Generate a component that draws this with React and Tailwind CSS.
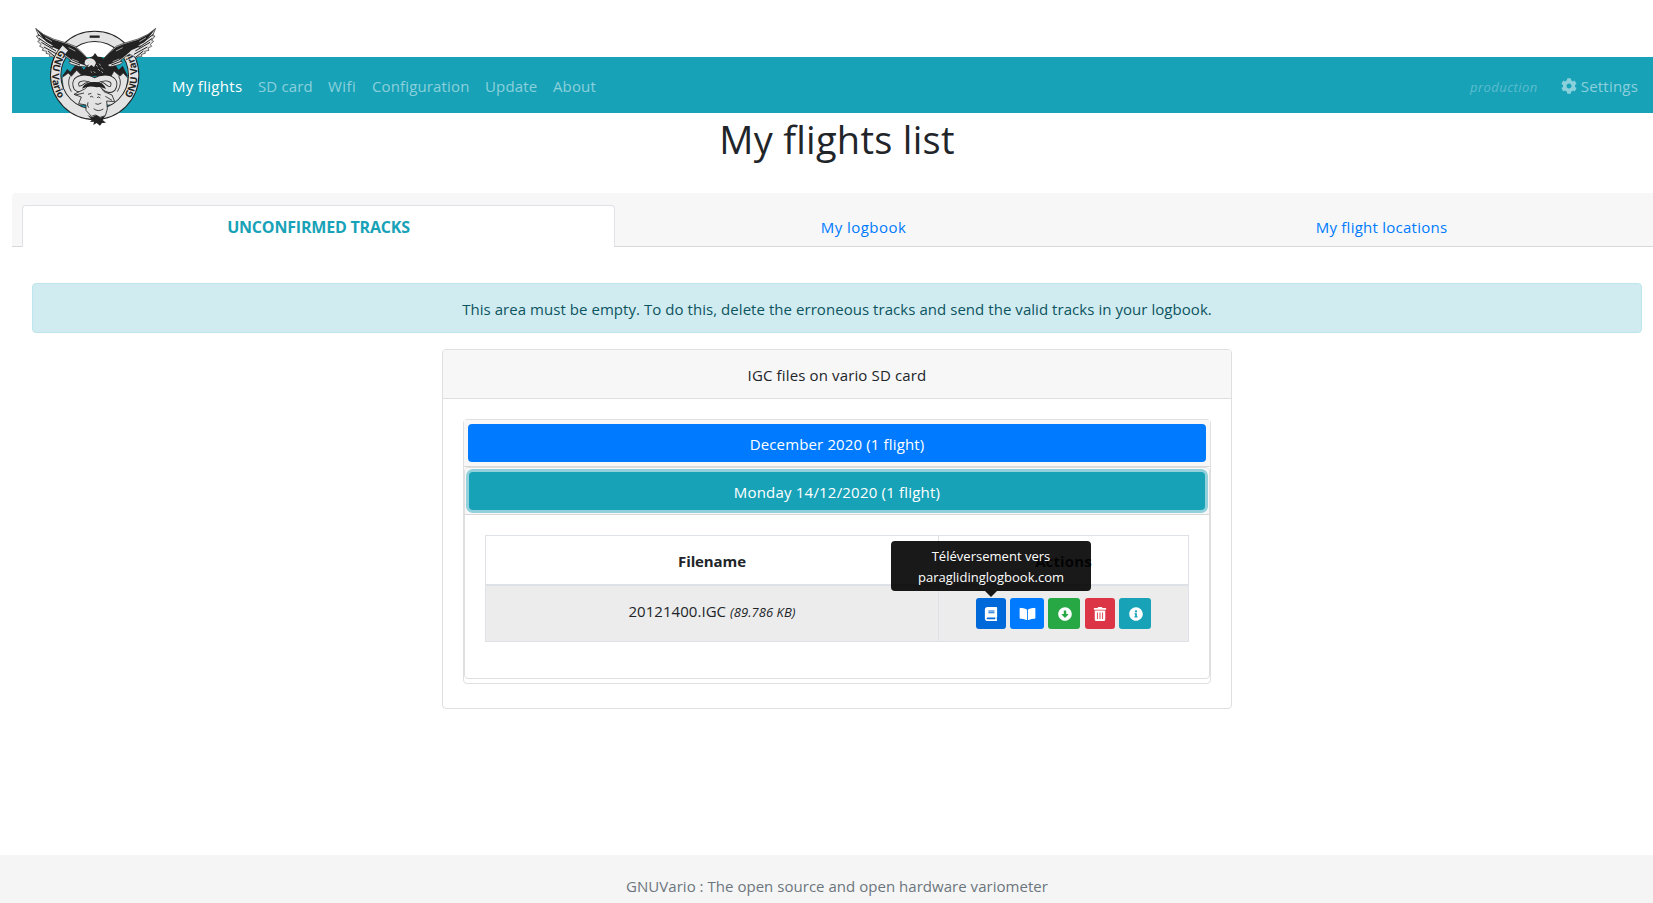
import { FaBook, FaBookOpen, FaArrowAltCircleDown, FaTrashAlt, FaInfoCircle, FaCog } from "react-icons/fa";

function Wing() {
  return (
    <g>
      <path d="M107 40 L130 58 L160 72 L200 84 L226 94 L246 112 L264 132 L264 156 L236 154 L214 148 L206 142 L212 136 L196 124 L186 118 L176 122 L164 129 L158 124 L148 124 L150 118 L138 115 L140 109 L127 106 L130 99 L119 94 L123 88 L113 79 L119 76 L109 63 L116 62 Z" fill="#e3e3e3" stroke="#222" strokeWidth="2" />
      <path d="M108 42 L132 60 L160 74 L200 86 L226 97 L246 114 L266 134 L264 154 L240 146 L216 136 L198 122 L186 112 L180 106 L166 100 L150 92 L160 92 L140 80 L130 70 Z" fill="#222" />
      <path d="M114 58 L148 84 M117 70 L158 98 M124 82 L168 108 M132 96 L172 118 M144 108 L166 126 M208 138 L240 150" stroke="#222" strokeWidth="3" fill="none" />
      <path d="M136 68 L156 80 M206 98 L226 108 M216 132 L236 140" stroke="#e3e3e3" strokeWidth="2" fill="none" />
    </g>
  );
}

function Logo() {
  return (
    <svg className="block h-[99px] w-[122px]" viewBox="105 39 366 297">
      <path d="M186 184 L202 162 L211 170 L232 142 L252 164 L285 114 L318 160 L342 144 L356 164 L368 152 L384 184 Z" fill="#222" />
      <path d="M186 188 L205 174 L214 184 L230 166 L254 190 L330 190 L342 168 L360 184 L370 174 L384 190 L376 236 L348 270 L220 270 L192 236 Z" fill="#e3e3e3" stroke="#222" strokeWidth="2" />
      <path id="gnuRight" d="M391 251 A128 128 0 0 0 374 90" fill="none" />
      <path id="gnuLeft" d="M182 104 A128 128 0 0 0 200 277" fill="none" />
      <circle cx="284" cy="181" r="117" fill="none" stroke="#222" strokeWidth="34" />
      <circle cx="284" cy="181" r="117" fill="none" stroke="#e3e3e3" strokeWidth="28" />
      <path d="M269 65 L299 65" stroke="#222" strokeWidth="7" />
      <text fontFamily="Open Sans, sans-serif" fontSize="30" fontWeight="700" fill="#222"><textPath href="#gnuRight">GNU Vario</textPath></text>
      <Wing />
      <g transform="translate(574 0) scale(-1 1)"><Wing /></g>
      <path d="M196 99 A120 120 0 0 0 168 150" fill="none" stroke="#e3e3e3" strokeWidth="22" />
      <path d="M184 94 A132 132 0 0 0 153 160" fill="none" stroke="#222" strokeWidth="3" />
      <text fontFamily="Open Sans, sans-serif" fontSize="30" fontWeight="700" fill="#222"><textPath href="#gnuLeft">GNU Vario</textPath></text>
      <path d="M258 132 L278 124 L304 126 L322 142 L336 176 L316 174 L308 186 L296 176 L284 184 L270 174 L254 182 L252 166 L262 156 Z" fill="#222" />
      <path d="M254 148 Q252 132 268 130 Q284 130 288 144 L282 156 L274 150 L266 156 Z" fill="#e3e3e3" />
      <path d="M254 148 L260 154 L266 150" stroke="#222" strokeWidth="3" fill="none" />
      <path d="M288 150 l5 5 m4 -9 l5 6 m-8 10 l6 6 m3 -11 l6 6 m-28 6 l5 5 m-14 -5 l4 4 m28 -4 l5 5" stroke="#e3e3e3" strokeWidth="2" />
      <path d="M250 180 L268 188 M320 180 L306 188" stroke="#222" strokeWidth="5" />
      <path d="M260 212 Q240 228 230 218 Q220 196 244 190 Q262 186 284 198 Q306 186 326 190 Q350 198 338 220 Q328 230 308 212" fill="none" stroke="#222" strokeWidth="20" strokeLinecap="round" />
      <path d="M260 212 Q240 228 230 218 Q220 196 244 190 Q262 186 284 198 Q306 186 326 190 Q350 198 338 220 Q328 230 308 212" fill="none" stroke="#e3e3e3" strokeWidth="15" strokeLinecap="round" />
      <path d="M210 184 Q200 206 214 230 M356 184 Q368 204 352 230" fill="none" stroke="#222" strokeWidth="2.5" />
      <path d="M254 222 L222 238 L244 246 L236 266 L258 270 L258 286 L274 304 L286 300 L300 307 L316 302 L322 282 L320 258 L344 260 L336 240 L312 230 L296 208 L270 208 Z" fill="#e3e3e3" stroke="#222" strokeWidth="2.5" />
      <path d="M246 221 Q254 199 284 201 Q310 199 318 222 Q300 213 290 217 Q268 210 246 221 Z" fill="#222" />
      <path d="M226 240 L252 234 M316 244 L336 256 M264 238 l10 -3 m18 2 l10 3 M270 246 q5 -5 10 1 M291 248 q5 -5 10 1 M264 262 q-4 9 2 16 M286 266 q8 5 18 -2 M281 281 q13 11 29 1" fill="none" stroke="#222" strokeWidth="2.5" />
      <path d="M262 300 L276 307 L289 300 L301 308 L316 302 L308 315 L318 323 L306 324 L300 332 L290 324 L280 330 L282 320 L270 321 L276 314 Z" fill="#222" />
    </svg>
  );
}

function NavItem({ children, className }) {
  return <a className={"whitespace-nowrap " + className}>{children}</a>;
}

function ActionButton({ children, className }) {
  return <button className={"flex h-[31px] items-center justify-center rounded-[3px] pt-px text-sm text-white " + className}>{children}</button>;
}

export default function App() {
  return (
    <div className="flex h-[903px] w-[1653px] flex-col overflow-hidden bg-white font-['Open_Sans',sans-serif] text-[15px] leading-6 tracking-[0.14px] text-[#212529]">
      <header className="mt-[57px] ml-3 flex h-14 shrink-0 items-center bg-[#17a2b8] pr-[15px] pl-[23px] text-white/50">
        <div className="-mt-[15px] mr-[15px] h-[99px] w-[122px] shrink-0">
          <Logo />
        </div>
        <nav className="flex flex-1 pt-0.5">
          <NavItem className="w-[86px] tracking-[0.3px] text-white">My flights</NavItem>
          <NavItem className="w-[70px]">SD card</NavItem>
          <NavItem className="w-[44px] tracking-[0.4px]">Wifi</NavItem>
          <NavItem className="w-[113px]">Configuration</NavItem>
          <NavItem className="w-[68px]">Update</NavItem>
          <NavItem className="w-[60px]">About</NavItem>
        </nav>
        <span className="mr-[23px] pt-1 text-[13px] tracking-[0.46px] text-white/30 italic">production</span>
        <a className="flex items-center gap-1 pt-0.5 tracking-[0.2px]"><FaCog className="-mt-px size-4" />Settings</a>
      </header>
      <h1 className="ml-[21px] flex h-20 shrink-0 justify-center pt-0.5 text-[38px] leading-[48px] tracking-[0.28px]">My flights list</h1>
      <div className="ml-3 flex h-[54px] shrink-0 items-end rounded-tl-[3px] border-b border-[#d8d8d8] bg-[#f7f7f7] pl-2.5 text-center tracking-[0.25px] text-[#007bff]">
        <div className="-mb-px h-[42px] w-[593px] rounded-t border border-b-0 border-[#dee2e6] bg-white pt-[9px] text-base font-bold tracking-[-0.2px] text-[#17a2b8]">UNCONFIRMED TRACKS</div>
        <div className="h-[31px] w-[497px] tracking-[0.45px]">My logbook</div>
        <div className="h-[31px] w-[539px]">My flight locations</div>
      </div>
      <div className="mt-9 mr-[11px] ml-8 flex h-[50px] shrink-0 items-center justify-center rounded border border-[#bee5eb] bg-[#d1ecf1] pt-0.5 tracking-[0.05px] text-[#0c5460]">
        This area must be empty. To do this, delete the erroneous tracks and send the valid tracks in your logbook.
      </div>
      <section className="mt-4 ml-[442px] h-[360px] w-[790px] shrink-0 rounded border border-[#dfdfdf] text-center">
        <h2 className="h-[49px] rounded-t-[3px] border-b border-[#dfdfdf] bg-[#f7f7f7] pt-[13px]">IGC files on vario SD card</h2>
        <div className="mx-5 mt-5 h-[265px] rounded border border-[#dfdfdf]">
          <div className="h-[47px] border-b border-[#d8d8d8] bg-[#f7f7f7] p-1">
            <button className="h-[38px] w-full rounded bg-[#007bff] pt-0.5 text-white">December 2020 (1 flight)</button>
          </div>
          <div className="h-[212px] rounded border border-[#dfdfdf]">
            <div className="h-[47px] rounded-t-[3px] border-b border-[#d8d8d8] bg-[#f7f7f7] p-1">
              <button className="h-[38px] w-full rounded bg-[#17a2b8] pt-0.5 tracking-[0.2px] text-white ring-3 ring-[#17a2b8]/45">Monday 14/12/2020 (1 flight)</button>
            </div>
            <div className="mx-5 mt-5 grid h-[107px] grid-cols-[453px_1fr] grid-rows-[50px_1fr] border border-[#dee2e6]">
              <div className="border-r border-b-2 border-[#dee2e6] pt-[13px] font-bold tracking-[-0.1px]">Filename</div>
              <div className="border-b-2 border-[#dee2e6] pt-[13px] font-bold">Actions</div>
              <div className="border-r border-[#dee2e6] bg-[#ececec] pt-[13px] tracking-[0.05px]">20121400.IGC <i className="text-[13px]">(89.786 KB)</i></div>
              <div className="flex items-start bg-[#ececec] pt-3 pl-[37px]">
                <div className="relative">
                  <ActionButton className="w-[30px] bg-[#0069d9]"><FaBook /></ActionButton>
                  <div className="absolute bottom-[38px] left-1/2 h-[50px] w-[200px] -translate-x-1/2 rounded bg-black/90 pt-[5px] text-[13px] leading-[21px] tracking-[0.02px] text-white">
                    Téléversement vers<br />paraglidinglogbook.com
                    <svg className="absolute top-full left-[94px] h-1.5 w-3" viewBox="0 0 12 6"><path d="M0 0H12L6 6Z" fill="#000" fillOpacity="0.9" /></svg>
                  </div>
                </div>
                <ActionButton className="ml-1 w-[34px] bg-[#007bff]"><FaBookOpen className="h-[14px] w-[17px]" /></ActionButton>
                <ActionButton className="ml-1 w-[32px] bg-[#28a745] pl-px"><FaArrowAltCircleDown /></ActionButton>
                <ActionButton className="ml-[5px] w-[30px] bg-[#dc3545]"><FaTrashAlt /></ActionButton>
                <ActionButton className="ml-1 w-[32px] bg-[#17a2b8] pl-px"><FaInfoCircle /></ActionButton>
              </div>
            </div>
          </div>
        </div>
      </section>
      <footer className="mt-auto h-12 shrink-0 bg-[#f5f5f5] pt-[19px] pl-[21px] text-center tracking-[0.03px] text-[#6c757d]">GNUVario : The open source and open hardware variometer</footer>
    </div>
  );
}
